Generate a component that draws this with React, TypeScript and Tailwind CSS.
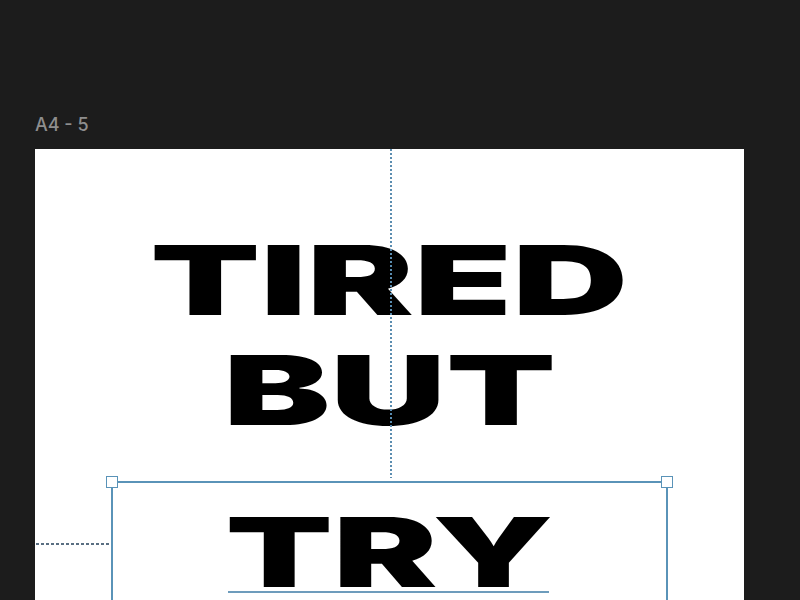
export default function App() {
  return (
    <div className="h-[600px] w-[800px] overflow-hidden bg-[#1c1c1c] pl-[35px] pt-[114px] font-['Inter','Liberation_Sans',sans-serif]">
      {/* Frame label */}
      <div className="text-[18px] font-medium leading-[22px] text-[#8e8e8e]">A4 - 5</div>

      {/* Artboard */}
      <div className="relative mt-[13px] h-[451px] w-[709px] overflow-hidden bg-white">
        <div className="flex flex-col items-center pt-[83px] text-[96px] font-black leading-none text-black">
          <span className="inline-block scale-x-[1.67]">TIRED</span>
          <span className="mt-[14px] inline-block scale-x-[1.67]">BUT</span>

          {/* Selected text box */}
          <div className="relative mt-[43px] flex h-[200px] w-[557px] justify-center border-2 border-[#5a93b8] pt-[21px]">
            <span className="inline-block scale-x-[1.63]">TRY</span>
            <div className="absolute left-[115px] top-[108px] h-[1.5px] w-[321px] bg-[#6d9cbc]" />
            <div className="absolute -left-[7px] -top-[7px] h-[12px] w-[12px] border-[1.5px] border-[#5a93b8] bg-white" />
            <div className="absolute -right-[7px] -top-[7px] h-[12px] w-[12px] border-[1.5px] border-[#5a93b8] bg-white" />
          </div>
        </div>

        {/* Guides */}
        <div className="absolute left-[355px] top-0 h-[329px] w-[2px] bg-[repeating-linear-gradient(to_bottom,#5b8db0_0_2px,transparent_2px_4px)]" />
        <div className="absolute left-[1px] top-[394px] h-[1.5px] w-[75px] bg-[repeating-linear-gradient(to_right,#5a6f82_0_3px,transparent_3px_5px)]" />
      </div>
    </div>
  );
}
